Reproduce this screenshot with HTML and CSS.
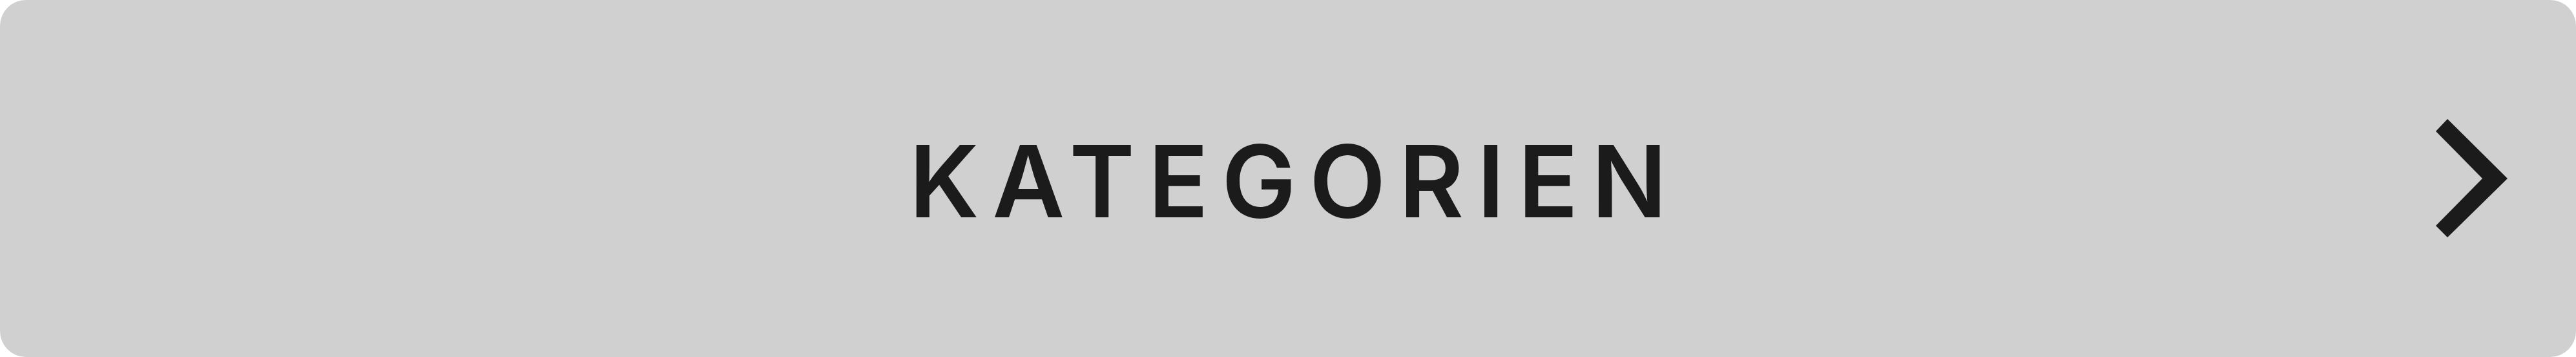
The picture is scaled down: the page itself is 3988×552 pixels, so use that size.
FILE: index.html
```html
<!DOCTYPE html>
<html lang="de">
<head>
<meta charset="utf-8">
<title>Kategorien</title>
<link rel="stylesheet" href="styles.css">
</head>
<body>
<button class="cat-button" type="button">
  <span class="cat-spacer"></span>
  <span class="cat-label">KATEGORIEN</span>
  <span class="cat-icon">
    <svg width="130" height="200" viewBox="0 0 130 200" aria-hidden="true">
      <polygon points="11,27 29,8 122,100 29,191 11,173 83,100" fill="#1b1b1b"/>
    </svg>
  </span>
</button>
</body>
</html>
```
FILE: styles.css
```css
html, body {
  margin: 0;
  padding: 0;
  background: #ffffff;
}
.cat-button {
  display: grid;
  grid-template-columns: 1fr auto 1fr;
  align-items: center;
  width: 3988px;
  height: 552px;
  margin: 0;
  padding: 0 98px;
  border: 0;
  border-radius: 40px;
  background: #d0d0d0;
  color: #1b1b1b;
  box-sizing: border-box;
  cursor: pointer;
}
.cat-label {
  font-family: Inter, "Liberation Sans", sans-serif;
  font-weight: 600;
  font-size: 154px;
  line-height: 1;
  letter-spacing: 20.5px;
  padding: 8px 0 0 20.5px;
}
.cat-icon {
  justify-self: end;
  display: flex;
}
.cat-icon svg {
  display: block;
}
```
